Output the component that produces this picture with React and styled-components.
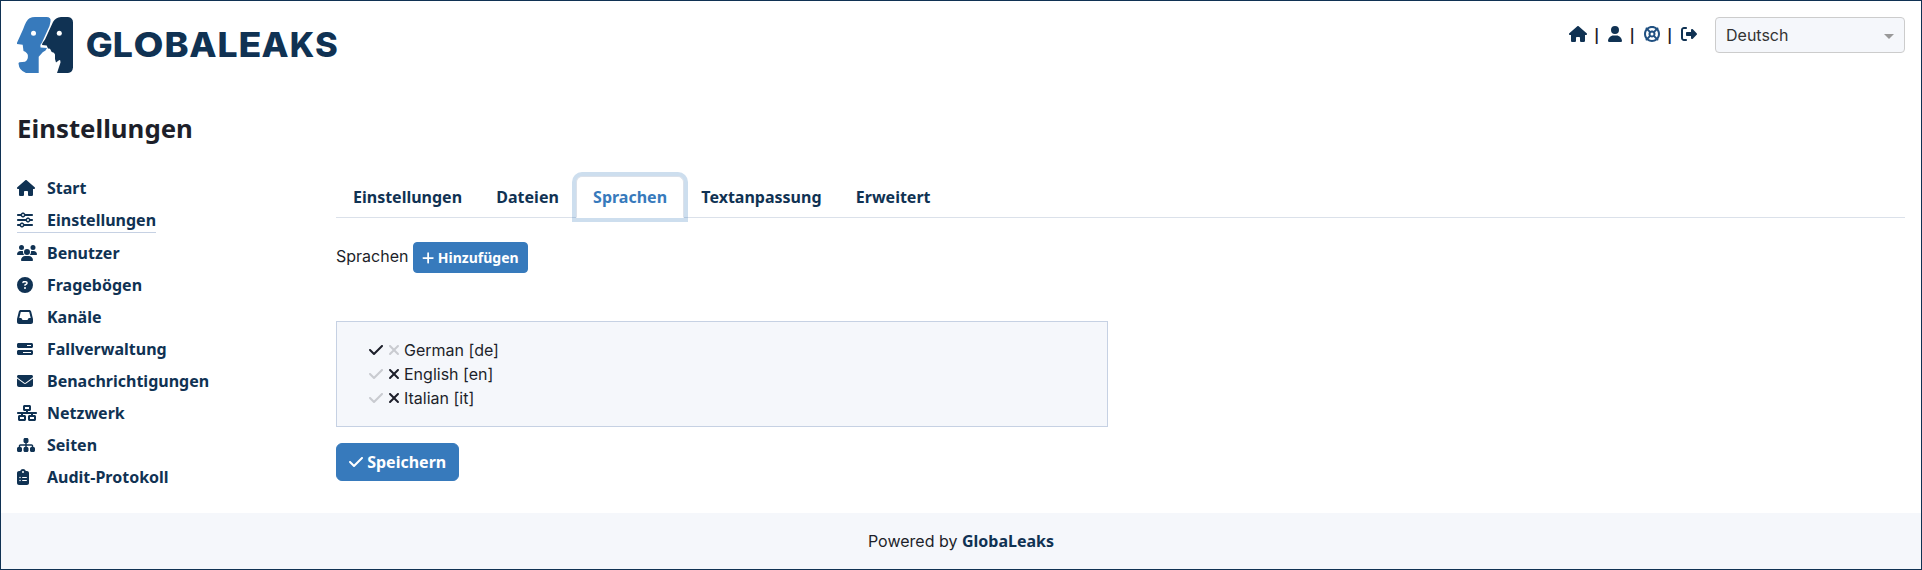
import React from "react";
import styled, { createGlobalStyle, css } from "styled-components";
import {
  FaHouse, FaSliders, FaUsers, FaCircleQuestion, FaInbox, FaBarsProgress, FaEnvelope,
  FaNetworkWired, FaSitemap, FaClipboardList, FaUser, FaLifeRing,
  FaRightFromBracket, FaCheck, FaXmark, FaPlus,
} from "react-icons/fa6";

const navy = "#103253";
const blue = "#377abc";
const ink = "#1d1f2a";
const mist = "#f5f7fb";
const line = "#c6d1e3";
const heading = '"Noto Sans", sans-serif';

const GlobalStyle = createGlobalStyle`
  *, *::before, *::after { box-sizing: border-box; }
  body {
    margin: 0;
    font: 400 16px/24px Inter, sans-serif;
    color: ${ink};
    background: #fff;
  }
`;

const Page = styled.div`
  display: flex;
  flex-direction: column;
  height: 570px;
  border: 1px solid ${navy};
`;

const Glyph = styled.span`
  display: flex;
  flex: none;
  opacity: ${(p) => (p.$faded ? 0.2 : 1)};
  svg {
    display: block;
    width: ${(p) => p.$width}em;
    height: 1em;
  }
`;

const Header = styled.header`
  display: flex;
  justify-content: space-between;
  align-items: flex-start;
  padding: 16px 16px 0;
  height: 106px;
`;

const LogoArt = styled.svg`
  display: block;
  width: 325px;
  height: 56px;
`;

const LogoText = styled.text`
  font: 800 34.4px Inter, sans-serif;
  fill: ${navy};
`;

const HeaderTools = styled.div`
  display: flex;
  align-items: flex-start;
`;

const ToolLinks = styled.div`
  display: flex;
  align-items: center;
  height: 34px;
`;

const ToolLink = styled.a`
  color: ${(p) => (p.$soft ? "#205081" : navy)};
`;

const Separator = styled.span`
  width: 21.5px;
  padding-right: 1px;
  text-align: center;
  font: 700 16px/24px ${heading};
`;

const LanguageSelect = styled.div`
  display: flex;
  align-items: center;
  justify-content: space-between;
  width: 190px;
  height: 36px;
  margin-left: 18px;
  padding: 0 10px;
  color: #333;
  background: ${mist};
  border: 1px solid #ccc;
  border-radius: 4px;
`;

const Caret = styled.span`
  margin-top: 2px;
  border: 5px solid transparent;
  border-top-color: #999;
  border-bottom-width: 0;
`;

const Title = styled.h1`
  margin: 0 16px 2px;
  font: 700 25.8px/42px ${heading};
`;

const Body = styled.div`
  display: flex;
  flex: 1;
  padding: 25px 16px 0;
`;

const Sidebar = styled.nav`
  display: flex;
  flex-direction: column;
  align-items: flex-start;
  gap: 8px;
  width: 319px;
`;

const SideLink = styled.a`
  display: flex;
  align-items: center;
  font: 700 16px/24px ${heading};
  color: ${navy};
  ${(p) => p.$active && css`
    border-bottom: 1px solid ${line};
  `}
`;

const SideIcon = styled.span`
  display: flex;
  width: 30px;
`;

const Content = styled.main`
  flex: 1;
`;

const Tabs = styled.div`
  display: flex;
  gap: 0.25px;
  border-bottom: 1px solid #dbe1ea;
`;

const Tab = styled.a`
  padding: 8px 16px;
  margin-bottom: -1px;
  border: 1px solid transparent;
  font: 700 16px/24px ${heading};
  color: ${navy};
  ${(p) => p.$active && css`
    color: ${blue};
    background: #fff;
    border-color: #dbe1ea #dbe1ea #fff;
    border-radius: 6px 6px 0 0;
    box-shadow: 0 0 0 4px rgba(55, 122, 188, 0.25);
  `}
`;

const AddRow = styled.div`
  display: flex;
  align-items: flex-start;
  gap: 4.5px;
  margin-top: 24px;
`;

const AddLabel = styled.span`
  padding-top: 2px;
`;

const Button = styled.button`
  display: inline-flex;
  align-items: center;
  gap: 0.26em;
  border: 1px solid ${blue};
  color: #fff;
  background: ${blue};
  font-family: ${heading};
  font-weight: 700;
  ${(p) => p.$small
    ? css`padding: 4px 8px; font-size: 14px; line-height: 21px; border-radius: 4px;`
    : css`padding: 6px 12px; font-size: 16px; line-height: 24px; border-radius: 6px;`}
`;

const LanguageBox = styled.ul`
  width: 772px;
  margin: 48px 0 16px;
  padding: 16px 32px;
  list-style: none;
  background: ${mist};
  border: 1px solid ${line};
`;

const LanguageRow = styled.li`
  display: flex;
  align-items: center;
  height: 24px;
  gap: 4.5px;
`;

const Footer = styled.footer`
  height: 56px;
  padding-top: 15.5px;
  text-align: center;
  background: ${mist};
`;

const FooterLink = styled.a`
  font-family: ${heading};
  font-weight: 700;
  color: ${navy};
`;

function Icon({ of: Shape, width = 1, faded }) {
  return (
    <Glyph $width={width} $faded={faded}>
      <Shape />
    </Glyph>
  );
}

const letters = [
  ["G", 68.7, 27], ["L", 95.7, 20.1], ["O", 116.5, 30], ["B", 147.4, 24.1],
  ["A", 172.2, 27.3], ["L", 200.4, 20.1], ["E", 221.4, 22.9],
  ["A", 244.5, 27.1], ["K", 272.7, 24.5], ["S", 298, 22.8],
];

function Logo() {
  return (
    <LogoArt viewBox="0 0 325 56" role="img" aria-label="GlobaLeaks">
      <path fill={blue} d="M18 0H29.500Q34.300 0 33.500 4.500L32.500 9L25 25.500Q22.500 28 23.500 30.500L30 31L28.500 33.500L25.700 35.300L21.700 39.700V56H9Q2 53.500 1.500 46.500Q1.500 45.500 2.500 45.300L8 44.700Q11.200 43 10.900 38.500Q10.500 35.500 6.500 34L5.700 27.700L0 27V25.800L6 12.500Q9.500 2.500 12.500 1.200Q15 0 18 0Z" />
      <path fill={navy} d="M44 0H51Q56 .5 56 5.500V50.500Q55.500 55.500 51 56H40L43.500 45.500Q43.600 42.500 42 43.200L39 45.500L38 42V37.500Q37.500 35.200 34.700 35L33 31.800L31 31.500L29.700 28.500L25 28L25.500 26L28 22.500L36 5Q38.500 .3 44 0Z" />
      <circle cx="16.500" cy="16.300" r="2.500" fill="#fff" />
      <circle cx="42.300" cy="16.300" r="2.500" fill="#fff" />
      {letters.map(([glyph, x, length], i) => (
        <LogoText key={i} x={x} y="40.200" textLength={length} lengthAdjust="spacingAndGlyphs">
          {glyph}
        </LogoText>
      ))}
    </LogoArt>
  );
}

const menu = [
  ["Start", FaHouse, 1.125],
  ["Einstellungen", FaSliders, 1],
  ["Benutzer", FaUsers, 1.25],
  ["Fragebögen", FaCircleQuestion, 1],
  ["Kanäle", FaInbox, 1],
  ["Fallverwaltung", FaBarsProgress, 1],
  ["Benachrichtigungen", FaEnvelope, 1],
  ["Netzwerk", FaNetworkWired, 1.25],
  ["Seiten", FaSitemap, 1.125],
  ["Audit-Protokoll", FaClipboardList, 0.75],
];

const tabs = ["Einstellungen", "Dateien", "Sprachen", "Textanpassung", "Erweitert"];

const languages = [
  { label: "German [de]", isDefault: true },
  { label: "English [en]" },
  { label: "Italian [it]" },
];

export default function App() {
  return (
    <Page>
      <GlobalStyle />
      <Header>
        <Logo />
        <HeaderTools>
          <ToolLinks>
            <ToolLink><Icon of={FaHouse} width={1.125} /></ToolLink>
            <Separator>|</Separator>
            <ToolLink><Icon of={FaUser} width={0.875} /></ToolLink>
            <Separator>|</Separator>
            <ToolLink $soft><Icon of={FaLifeRing} /></ToolLink>
            <Separator>|</Separator>
            <ToolLink><Icon of={FaRightFromBracket} /></ToolLink>
          </ToolLinks>
          <LanguageSelect>Deutsch<Caret /></LanguageSelect>
        </HeaderTools>
      </Header>
      <Title>Einstellungen</Title>
      <Body>
        <Sidebar>
          {menu.map(([label, shape, width]) => (
            <SideLink key={label} $active={label === "Einstellungen"}>
              <SideIcon><Icon of={shape} width={width} /></SideIcon>
              {label}
            </SideLink>
          ))}
        </Sidebar>
        <Content>
          <Tabs>
            {tabs.map((label) => (
              <Tab key={label} $active={label === "Sprachen"}>{label}</Tab>
            ))}
          </Tabs>
          <AddRow>
            <AddLabel>Sprachen</AddLabel>
            <Button $small><Icon of={FaPlus} width={0.875} />Hinzufügen</Button>
          </AddRow>
          <LanguageBox>
            {languages.map(({ label, isDefault }) => (
              <LanguageRow key={label}>
                <Icon of={FaCheck} width={0.875} faded={!isDefault} />
                <Icon of={FaXmark} width={0.75} faded={isDefault} />
                {label}
              </LanguageRow>
            ))}
          </LanguageBox>
          <Button><Icon of={FaCheck} width={0.875} />Speichern</Button>
        </Content>
      </Body>
      <Footer>
        Powered by <FooterLink>GlobaLeaks</FooterLink>
      </Footer>
    </Page>
  );
}
